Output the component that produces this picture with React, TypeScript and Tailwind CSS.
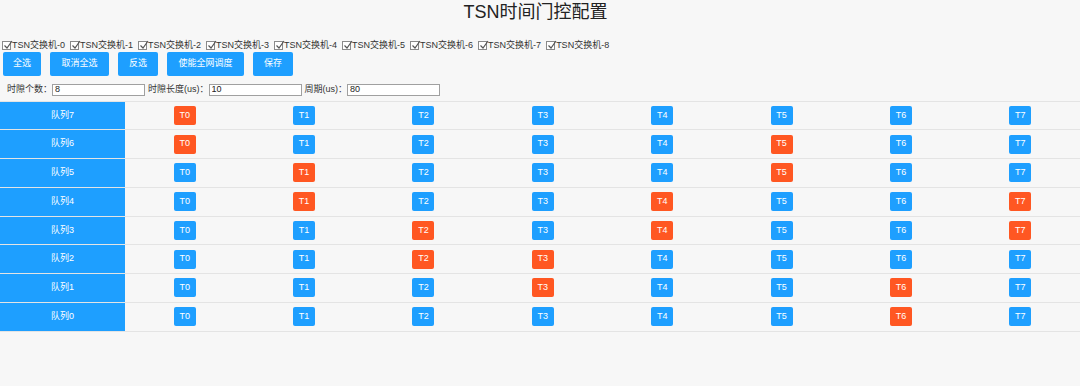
const switches = [0, 1, 2, 3, 4, 5, 6, 7, 8]

// queue -> slots that are gated (shown in orange)
const gated: Record<number, number[]> = {
  7: [0],
  6: [0, 5],
  5: [1, 5],
  4: [1, 4, 7],
  3: [2, 4, 7],
  2: [2, 3],
  1: [3, 6],
  0: [6],
}

const slots = [0, 1, 2, 3, 4, 5, 6, 7]
const queues = [7, 6, 5, 4, 3, 2, 1, 0]

function CheckBox() {
  return (
    <span className="relative ml-[2px] mr-[1px] inline-block w-[9px] h-[9px] border border-[#8a8a8a] bg-white">
      <svg
        viewBox="0 0 10 10"
        className="absolute left-[0px] top-[-2px] w-[10px] h-[10px]"
        fill="none"
        stroke="#555"
        strokeWidth="1.2"
      >
        <path d="M1.5 5.5 L4 8 L9 1" />
      </svg>
    </span>
  )
}

function Field({ label, value }: { label: string; value: string }) {
  return (
    <div className="flex items-center">
      <span className="text-[9px] text-[#333]">{label}</span>
      <input
        readOnly
        value={value}
        className="w-[93px] h-[12px] border border-[#a0a0a0] bg-white px-[2px] text-[9px] text-[#222] outline-none"
      />
    </div>
  )
}

export default function App() {
  const btn =
    'h-[24px] rounded-[2px] bg-[#1e9fff] text-white text-[9px] text-center'

  return (
    <div
      className="w-[1080px] h-[386px] bg-[#f7f7f7] overflow-hidden text-[#222]"
      style={{ fontFamily: '"Liberation Sans", "Noto Sans CJK SC", sans-serif' }}
    >
      <h2 className="h-[24px] pr-[9px] text-center text-[18px] leading-[24px] font-normal text-[#222]">
        TSN时间门控配置
      </h2>

      <div className="mt-[15px] flex h-[13px] items-center gap-[3px]">
        {switches.map((n) => (
          <label key={n} className="flex items-center text-[9px] text-[#333]">
            <CheckBox />
            TSN交换机-{n}
          </label>
        ))}
      </div>

      <div className="flex gap-[9px] pl-[3px]">
        <button className={btn + ' w-[38px]'}>全选</button>
        <button className={btn + ' w-[59px]'}>取消全选</button>
        <button className={btn + ' w-[40px]'}>反选</button>
        <button className={btn + ' w-[77px]'}>使能全网调度</button>
        <button className={btn + ' w-[40px]'}>保存</button>
      </div>

      <div className="mt-[7px] flex items-center gap-[3px] pl-[7px]">
        <Field label="时隙个数：" value="8" />
        <Field label="时隙长度(us)：" value="10" />
        <Field label="周期(us)：" value="80" />
      </div>

      <div className="mt-[4px] border-t border-[#e4e4e4]">
        {queues.map((q) => (
          <div key={q} className="flex h-[28.75px] border-b border-[#e4e4e4]">
            <div className="flex w-[125px] items-center justify-center bg-[#1e9fff] text-[9px] text-white">
              队列{q}
            </div>
            {slots.map((s) => (
              <div key={s} className="flex flex-1 items-center justify-center">
                <button
                  className={
                    'w-[22px] h-[19px] rounded-[2px] text-[9px] text-white ' +
                    (gated[q].includes(s) ? 'bg-[#ff5722]' : 'bg-[#1e9fff]')
                  }
                >
                  T{s}
                </button>
              </div>
            ))}
          </div>
        ))}
      </div>
    </div>
  )
}
